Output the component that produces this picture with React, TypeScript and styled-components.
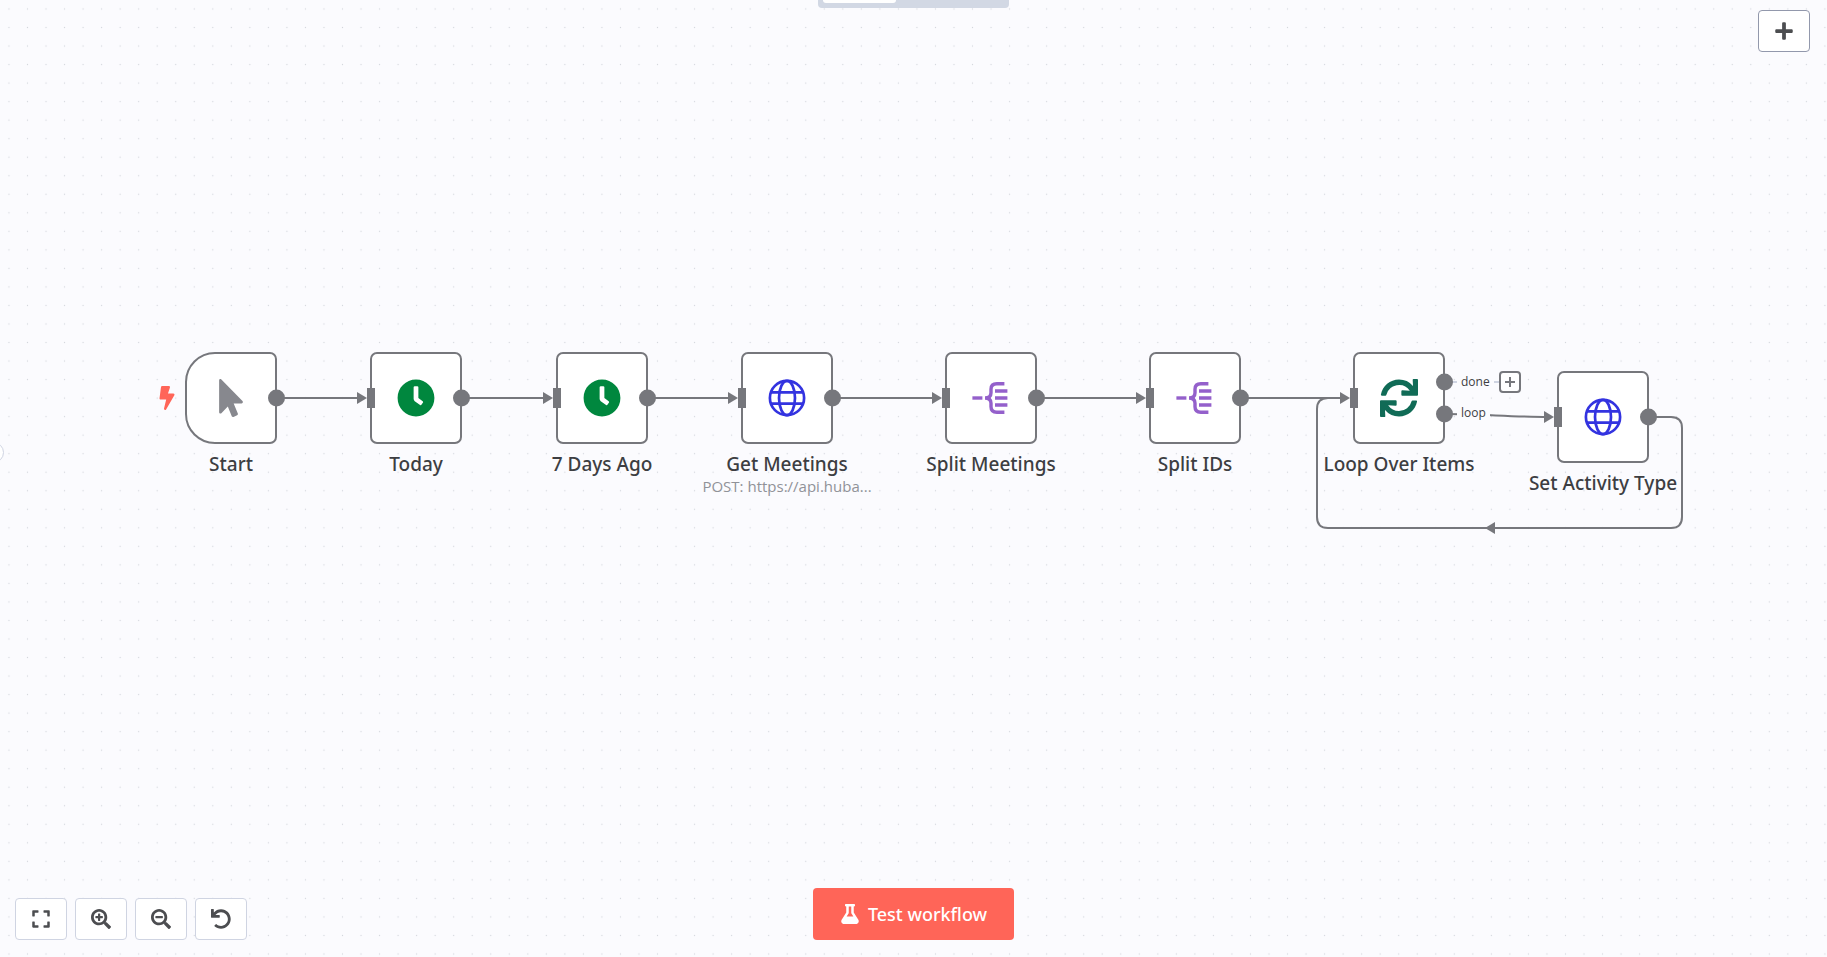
import React from "react";
import styled, { createGlobalStyle, css } from "styled-components";
import {
  FaBolt,
  FaClock,
  FaExpand,
  FaFlask,
  FaMousePointer,
  FaPlus,
  FaSearchMinus,
  FaSearchPlus,
  FaSync,
  FaUndo,
} from "react-icons/fa";

const color = {
  canvas: "#fbfbfe",
  dot: "#d3d6dc",
  line: "#76777c",
  faint: "#cfd4e2",
  text: "#3d3e42",
  muted: "#909298",
  primary: "#ff6558",
  icon: "#4c4d50",
};

const NODE = 92;

const GlobalStyle = createGlobalStyle`
  *, *::before, *::after { box-sizing: border-box; }
  body {
    margin: 0;
    background: ${color.canvas};
    color: ${color.text};
    font-family: "Open Sans", "Noto Sans", sans-serif;
  }
  button { font: inherit; cursor: pointer; }
`;

const Canvas = styled.main`
  position: relative;
  width: 100%;
  height: 100vh;
  overflow: hidden;
`;

const Layer = styled.svg`
  position: absolute;
  inset: 0;
  width: 100%;
  height: 100%;
`;

const NodeFrame = styled.div<{ $x: number; $y: number }>`
  position: absolute;
  left: ${(p) => p.$x}px;
  top: ${(p) => p.$y}px;
  width: ${NODE}px;
  display: flex;
  flex-direction: column;
  align-items: center;
`;

const NodeBox = styled.div<{ $trigger?: boolean }>`
  position: relative;
  flex: none;
  width: ${NODE}px;
  height: ${NODE}px;
  display: grid;
  place-items: center;
  background: #fff;
  border: 2px solid ${color.line};
  border-radius: ${(p) => (p.$trigger ? "30px 7px 7px 30px" : "7px")};
`;

const NodeLabel = styled.div`
  margin-top: 8px;
  font-family: "Noto Sans", "Open Sans", sans-serif;
  font-size: 19px;
  line-height: 24px;
  font-weight: 500;
  white-space: nowrap;
`;

const NodeSubtitle = styled.div`
  font-size: 15px;
  line-height: 20px;
  color: ${color.muted};
  white-space: nowrap;
`;

const InputPort = styled.span`
  position: absolute;
  left: -5px;
  top: 50%;
  width: 8px;
  height: 20px;
  transform: translateY(-50%);
  background: ${color.line};
`;

const OutputPort = styled.span<{ $top: string }>`
  position: absolute;
  right: -10px;
  top: ${(p) => p.$top};
  width: 17px;
  height: 17px;
  transform: translateY(-50%);
  border-radius: 50%;
  background: ${color.line};
`;

const TriggerMark = styled.span`
  position: absolute;
  right: 100%;
  top: 50%;
  margin-right: 8px;
  display: flex;
  transform: translateY(-50%);
  color: ${color.primary};
`;

const EdgeLabel = styled.span<{ $x: number; $y: number }>`
  position: absolute;
  left: ${(p) => p.$x}px;
  top: ${(p) => p.$y}px;
  padding: 0 4px;
  background: ${color.canvas};
  font-size: 12px;
  line-height: 16px;
`;

const AddNext = styled.button`
  position: absolute;
  left: 1499px;
  top: 371px;
  width: 22px;
  height: 22px;
  padding: 0;
  display: grid;
  place-items: center;
  background: #fff;
  border: 2px solid ${color.line};
  border-radius: 4px;
  color: ${color.line};
`;

const iconButton = css`
  width: 52px;
  height: 42px;
  padding: 0;
  display: grid;
  place-items: center;
  background: #fff;
  border-radius: 4px;
  color: ${color.icon};
  font-size: 20px;
`;

const ControlButton = styled.button`
  ${iconButton}
  border: 1px solid ${color.faint};
`;

const AddButton = styled.button`
  ${iconButton}
  position: absolute;
  top: 10px;
  right: 17px;
  border: 1px solid #9298ac;
`;

const Controls = styled.div`
  position: absolute;
  left: 15px;
  bottom: 17px;
  display: flex;
  gap: 8px;
`;

const Center = styled.div<{ $edge: "top" | "bottom" }>`
  position: absolute;
  left: 0;
  right: 0;
  ${(p) => (p.$edge === "top" ? "top: 0;" : "bottom: 17px;")}
  display: flex;
  justify-content: center;
  pointer-events: none;
`;

const TestButton = styled.button`
  height: 52px;
  padding: 0 27px;
  display: flex;
  align-items: center;
  gap: 8px;
  border: 0;
  border-radius: 4px;
  background: ${color.primary};
  color: #fff;
  font-family: "Noto Sans", "Open Sans", sans-serif;
  font-size: 18px;
  line-height: 24px;
  font-weight: 500;
  pointer-events: auto;

  svg { font-size: 20px; }
`;

const ModeSwitch = styled.nav`
  width: 191px;
  height: 8px;
  padding: 0 5px;
  display: flex;
  align-items: flex-start;
  background: #d2d8e4;
  border-radius: 0 0 4px 4px;
`;

const ModeTab = styled.button`
  width: 73px;
  height: 3px;
  padding: 0;
  border: 0;
  background: #fff;
  border-radius: 0 0 3px 3px;
  pointer-events: auto;
`;

const PanelHandle = styled.button`
  position: absolute;
  left: -17px;
  top: 442px;
  width: 21px;
  height: 21px;
  padding: 0;
  border: 1px solid ${color.faint};
  border-radius: 50%;
  background: #fff;
`;

const Globe = () => (
  <svg width="38" height="38" viewBox="0 0 38 38" fill="none" stroke="#3333e0" strokeWidth="2.7">
    <circle cx="19" cy="19" r="17.1" />
    <ellipse cx="19" cy="19" rx="8" ry="17.1" />
    <path d="M3 13.4h32M3 24.6h32" />
  </svg>
);

const SplitOut = () => (
  <svg width="38" height="38" viewBox="0 0 38 38" fill="none" stroke="#9460cb" strokeWidth="3.4">
    <path d="M0.4 19h10" />
    <path d="M32.4 4.8h-7.6q-5.8 0-5.8 5.4v3.6q0 5.2-6 5.2 6 0 6 5.2v3.6q0 5.4 5.8 5.4H32.4" />
    <path d="M23 12h12.4M23 19h12.4M23 26h12.4" />
  </svg>
);

type NodeSpec = {
  x: number;
  y: number;
  label: string;
  subtitle?: string;
  icon: React.ReactNode;
  trigger?: boolean;
  outputs?: string[];
};

const TOP = 352;

const nodes: NodeSpec[] = [
  { x: 185, y: TOP, label: "Start", icon: <FaMousePointer size={38} color="#87888e" />, trigger: true },
  { x: 370, y: TOP, label: "Today", icon: <FaClock size={38} color="#00873e" /> },
  { x: 556, y: TOP, label: "7 Days Ago", icon: <FaClock size={38} color="#00873e" /> },
  { x: 741, y: TOP, label: "Get Meetings", subtitle: "POST: https://api.huba...", icon: <Globe /> },
  { x: 945, y: TOP, label: "Split Meetings", icon: <SplitOut /> },
  { x: 1149, y: TOP, label: "Split IDs", icon: <SplitOut /> },
  { x: 1353, y: TOP, label: "Loop Over Items", icon: <FaSync size={38} color="#106b56" />, outputs: ["32%", "68%"] },
  { x: 1557, y: TOP + 19, label: "Set Activity Type", icon: <Globe /> },
];

const straightEdges = nodes.slice(0, 6).map((n, i) => ({
  from: n.x + NODE,
  to: nodes[i + 1].x,
}));

const Edges = () => (
  <Layer aria-hidden="true">
    <defs>
      <pattern id="grid" width="20" height="20" patternTransform="translate(-0.3 -0.3) scale(0.9265)" patternUnits="userSpaceOnUse">
        <circle cx="10" cy="10" r="0.7" fill={color.dot} />
      </pattern>
    </defs>
    <rect width="100%" height="100%" fill="url(#grid)" />
    <g fill="none" stroke={color.line} strokeWidth="2">
      {straightEdges.map((e) => (
        <path key={e.from} d={`M${e.from} 398H${e.to - 8}`} />
      ))}
      <path d="M1445 414C1480 414 1512 417 1549 417" />
      <path d="M1649 417H1671Q1682 417 1682 428V517Q1682 528 1671 528H1328Q1317 528 1317 517V409Q1317 398 1328 398H1345" />
    </g>
    <path d="M1445 382H1500" stroke={color.faint} strokeWidth="2" />
    <g fill={color.line}>
      {straightEdges.map((e) => (
        <path key={e.to} d={`M${e.to - 13} 392L${e.to - 3} 398L${e.to - 13} 404Z`} />
      ))}
      <path d="M1544 411L1554 417L1544 423Z" />
      <path d="M1495 522L1485 528L1495 534Z" />
    </g>
  </Layer>
);

const WorkflowNode = ({ x, y, label, subtitle, icon, trigger, outputs = ["50%"] }: NodeSpec) => (
  <NodeFrame $x={x} $y={y}>
    <NodeBox $trigger={trigger}>
      {icon}
      {trigger ? (
        <TriggerMark>
          <FaBolt size={24} />
        </TriggerMark>
      ) : (
        <InputPort />
      )}
      {outputs.map((top) => (
        <OutputPort key={top} $top={top} />
      ))}
    </NodeBox>
    <NodeLabel>{label}</NodeLabel>
    {subtitle && <NodeSubtitle>{subtitle}</NodeSubtitle>}
  </NodeFrame>
);

export default function App() {
  return (
    <>
      <GlobalStyle />
      <Canvas>
        <Edges />
        <EdgeLabel $x={1457} $y={374}>done</EdgeLabel>
        <EdgeLabel $x={1457} $y={405}>loop</EdgeLabel>
        {nodes.map((n) => (
          <WorkflowNode key={n.label} {...n} />
        ))}
        <AddNext aria-label="Add node after done">
          <svg width="12" height="12" viewBox="0 0 12 12" stroke="currentColor" strokeWidth="2">
            <path d="M6 1v10M1 6h10" />
          </svg>
        </AddNext>
        <PanelHandle aria-label="Expand side panel" />
        <Center $edge="top">
          <ModeSwitch>
            <ModeTab aria-label="Editor" />
          </ModeSwitch>
        </Center>
        <AddButton aria-label="Add node">
          <FaPlus />
        </AddButton>
        <Controls>
          <ControlButton aria-label="Fit to view"><FaExpand /></ControlButton>
          <ControlButton aria-label="Zoom in"><FaSearchPlus /></ControlButton>
          <ControlButton aria-label="Zoom out"><FaSearchMinus /></ControlButton>
          <ControlButton aria-label="Reset zoom"><FaUndo /></ControlButton>
        </Controls>
        <Center $edge="bottom">
          <TestButton>
            <FaFlask />
            Test workflow
          </TestButton>
        </Center>
      </Canvas>
    </>
  );
}
